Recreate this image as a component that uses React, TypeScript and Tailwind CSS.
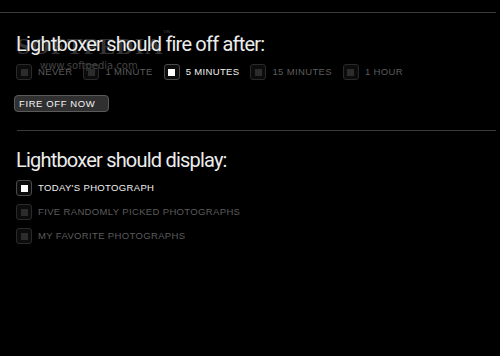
import React from "react";

type Opt = { label: string; checked?: boolean };

const fireOptions: Opt[] = [
  { label: "NEVER" },
  { label: "1 MINUTE" },
  { label: "5 MINUTES", checked: true },
  { label: "15 MINUTES" },
  { label: "1 HOUR" },
];

const displayOptions: Opt[] = [
  { label: "TODAY'S PHOTOGRAPH", checked: true },
  { label: "FIVE RANDOMLY PICKED PHOTOGRAPHS" },
  { label: "MY FAVORITE PHOTOGRAPHS" },
];

function Check({ label, checked }: Opt) {
  return (
    <div className="flex items-center gap-[6px]">
      <span
        className={
          "flex h-[16px] w-[16px] items-center justify-center rounded-[3px] border bg-[#0c0c0c] " +
          (checked ? "border-[#4a4a4a]" : "border-[#2a2a2a]")
        }
      >
        <span className={"h-[7px] w-[7px] " + (checked ? "bg-white" : "bg-[#2c2c2c]")} />
      </span>
      <span
        className={
          "text-[9.5px] leading-none tracking-[0.35px] " + (checked ? "text-[#f0f0f0]" : "text-[#5c5c5c]")
        }
      >
        {label}
      </span>
    </div>
  );
}

export default function App() {
  return (
    <div className="relative h-[356px] w-[500px] overflow-hidden bg-black pt-[12px] font-['Liberation_Sans',sans-serif]">
      <div className="mr-[4px] border-t border-[#3a3a3a]" />

      {/* watermark */}
      <div className="pointer-events-none absolute left-[17px] top-[28px] font-['Liberation_Serif',serif] text-[24px] font-bold tracking-[1px] text-[#333]">
        SOFTPEDIA<span className="align-top text-[7px]">™</span>
      </div>
      <div className="pointer-events-none absolute left-[40px] top-[58px] font-['DejaVu_Sans',sans-serif] text-[10px] text-[#444]">
        www.softpedia.com
      </div>

      {/* fire off section */}
      <div className="pl-[16px]">
        <h1 className="relative mt-[19px] text-[20px] leading-[24px] tracking-[-0.8px] text-[#ececec] font-['Roboto',sans-serif]">
          Lightboxer should fire off after:
        </h1>
        <div className="mt-[8px] flex items-center gap-[11px]">
          {fireOptions.map((o) => (
            <Check key={o.label} {...o} />
          ))}
        </div>
        <button className="-ml-[2px] mt-[15px] flex h-[17px] w-[95px] items-center rounded-[4px] border border-[#5a5a5a] bg-[#303030] pl-[4px] text-[9.5px] leading-none tracking-[0.6px] text-[#f4f4f4]">
          FIRE OFF NOW
        </button>
      </div>

      <div className="ml-[17px] mr-[4px] mt-[18px] border-t border-[#3a3a3a]" />

      {/* display section */}
      <div className="pl-[16px]">
        <h2 className="mt-[17px] text-[20px] leading-[24px] tracking-[-0.8px] text-[#ececec] font-['Roboto',sans-serif]">
          Lightboxer should display:
        </h2>
        <div className="mt-[8px] flex flex-col gap-[8px]">
          {displayOptions.map((o) => (
            <Check key={o.label} {...o} />
          ))}
        </div>
      </div>
    </div>
  );
}
